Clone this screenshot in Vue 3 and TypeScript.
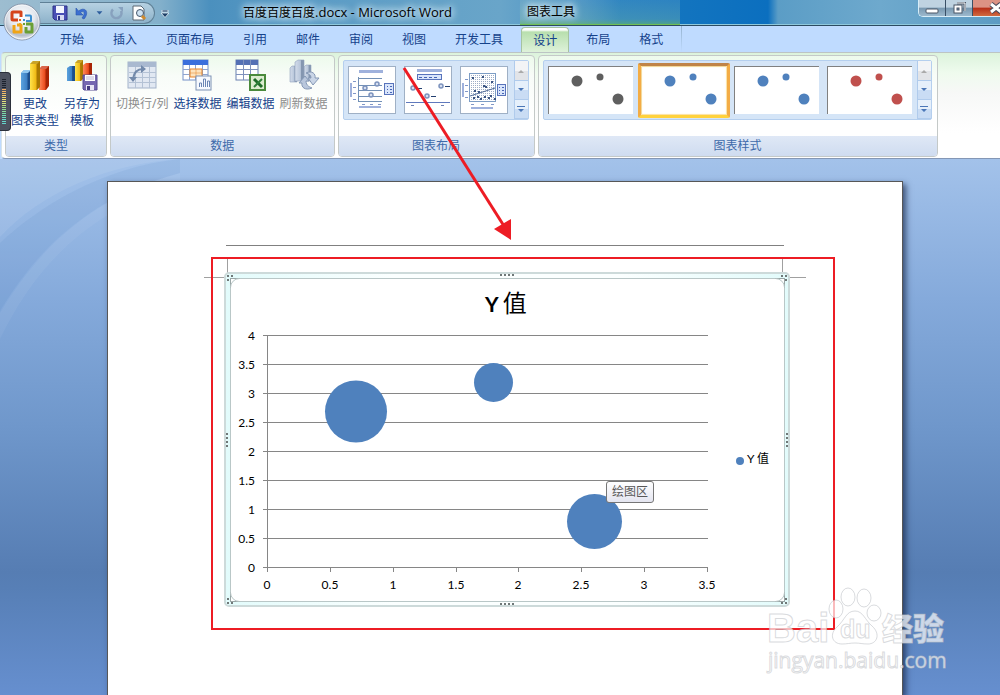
<script setup lang="ts">
interface Dot { x: number; y: number; r: number }

const tabs: string[] = ['开始', '插入', '页面布局', '引用', '邮件', '审阅', '视图', '开发工具', '设计', '布局', '格式']
const activeTab = '设计'

const styleColors: string[] = ['#5f5f5f', '#4f81bd', '#4f81bd', '#c0504d']
const selectedStyle = 1
const thumbDots: Dot[] = [
  { x: 28, y: 14, r: 5 },
  { x: 51, y: 10, r: 3 },
  { x: 69, y: 32, r: 5 },
]

const yTicks = [4, 3.5, 3, 2.5, 2, 1.5, 1, 0.5, 0].map((v) => ({ label: String(v), y: Math.floor(567.5 - v * 58) }))
const xTicks = [0, 0.5, 1, 1.5, 2, 2.5, 3, 3.5].map((v) => ({ label: String(v), x: 267 + Math.round(v * 125.7) }))
const bubbles: Dot[] = [
  { x: 356, y: 411.5, r: 31 },
  { x: 493.5, y: 382.5, r: 19.5 },
  { x: 594.5, y: 521.5, r: 27.5 },
]

const scatter: number[][] = [[12, 12], [22, 11], [23, 20], [31, 16], [14, 25], [13, 32], [17, 31], [20, 33], [24, 31], [28, 32], [30, 30], [34, 33], [18, 26], [25, 21]]
const meter: string[] = ['#1c222d', '#1c222d', '#1c222d', '#1c222d', '#1c222d', '#f0a860', '#f4b566', '#f4c268', '#f0cc70', '#f4d470', '#f2de74', '#e6e27c', '#d0e080', '#bade84', '#a4dc88', '#92dc90', '#88dc9c', '#7cdcaa', '#74dcb6', '#6edcc2', '#6adcca', '#66d8cc', '#64d4cc']
</script>

<template>
  <div class="app">
    <header class="titlebar">
      <div class="qat">
        <button class="plain" aria-label="保存">
          <svg width="16" height="16" viewBox="0 0 16 16"><path d="M1 1h14v14H3l-2-2z" fill="#4a4fb5" stroke="#2d3286" /><rect x="4" y="1" width="8" height="7" fill="#f4f6ff" /><rect x="5" y="10" width="7" height="5" fill="#d7daf2" /><rect x="6" y="11" width="2" height="4" fill="#2d3286" /></svg>
        </button>
        <button class="plain" aria-label="撤消">
          <svg width="14" height="14" viewBox="0 0 14 14"><path d="M1 2v7h7L5.500 6.500C9 4 11 7 7 12l2 1c6-7 1-13-5.500-8z" fill="#3c6fd0" stroke="#2854ac" stroke-width=".6" /></svg>
        </button>
        <svg width="7" height="5" viewBox="0 0 7 5"><path d="M0 0h7L3.500 4z" fill="#2c5f9c" stroke="#dce9f5" stroke-width=".4" /></svg>
        <button class="plain" aria-label="恢复" disabled>
          <svg width="14" height="14" viewBox="0 0 14 14"><path d="M3 3.500A5 5 0 1 0 11 5" fill="none" stroke="#87a1be" stroke-width="2.500" /><path d="M8 1h5v5z" fill="#87a1be" /></svg>
        </button>
        <button class="plain" aria-label="打印预览">
          <svg width="16" height="16" viewBox="0 0 16 16"><path d="M2 1h8l3 3v11H2z" fill="#fff" stroke="#5b6673" /><circle cx="9" cy="8" r="3.500" fill="#cfe3f3" stroke="#44566b" /><path d="m11 11 3 3" stroke="#d08a2c" stroke-width="3" /></svg>
        </button>
        <button class="qat-more" aria-label="自定义快速访问工具栏">
          <svg width="8" height="8" viewBox="0 0 8 8"><path d="M1 0h6v2H1zM0 3h8L4 7.500z" fill="#1f4068" stroke="#e6f2fa" stroke-width=".8" /></svg>
        </button>
      </div>
      <div class="doc-title"><span class="glow">百度百度百度<span class="latin">.docx - Microsoft Word</span></span></div>
      <div class="context"><span class="glow">图表工具</span></div>
      <div class="window-controls">
        <button class="wc" aria-label="最小化"><svg width="14" height="12" viewBox="0 0 14 12"><rect x="1" y="7" width="12" height="4" rx="1" fill="#fff" stroke="#4b5666" /></svg></button>
        <button class="wc" aria-label="还原"><svg width="14" height="12" viewBox="0 0 14 12"><path d="M5 1h8v8" fill="none" stroke="#4b5666" stroke-width="3" /><path d="M5 1h8v8" fill="none" stroke="#fff" /><rect x="2" y="3" width="8" height="8" fill="#fff" stroke="#4b5666" /><rect x="5" y="6" width="2" height="2" fill="#7395b5" stroke="#4b5666" /></svg></button>
        <button class="wc close" aria-label="关闭"><svg width="14" height="12" viewBox="0 0 14 12"><path d="m2 2 10 8M12 2 2 10" stroke="#4b4b5c" stroke-width="5" /><path d="m2 2 10 8M12 2 2 10" stroke="#fff" stroke-width="3" /></svg></button>
      </div>
    </header>

    <nav class="tabs">
      <button v-for="t in tabs" :key="t" class="tab" :class="{ active: t === activeTab }">{{ t }}</button>
      <i class="context-edge"></i>
    </nav>

    <button class="orb" aria-label="Office 按钮">
      <svg width="40" height="40" viewBox="0 0 40 40">
        <defs>
          <radialGradient id="orbFill" cx=".5" cy=".35" r=".65"><stop offset="0" stop-color="#fff" /><stop offset=".55" stop-color="#e3e7ee" /><stop offset=".8" stop-color="#b5bdca" /><stop offset="1" stop-color="#eef2f8" /></radialGradient>
        </defs>
        <circle cx="20" cy="20" r="18" fill="url(#orbFill)" stroke="#8795aa" />
        <circle cx="20" cy="20" r="17" fill="none" stroke="#fff" stroke-opacity=".7" />
        <g fill="none" stroke-linejoin="round">
          <path d="M16 18h-5q-1 0-1-1v-6q0-1 1-1h8v5" stroke="#d5441c" stroke-width="3" />
          <path d="M23 13.500h5q1 0 1 1V19h-5" stroke="#3d8fd0" stroke-width="2" />
          <path d="M12 23v7h7v-7h-4" stroke="#f0a416" stroke-width="3" />
          <path d="M24 22h6v8h-6v-5" stroke="#6a9f35" stroke-width="3" />
        </g>
        <g fill="#e06a24"><rect x="17" y="17" width="2" height="2" /><rect x="17" y="21" width="2" height="2" fill="#efa81c" /><rect x="21" y="17" width="2" height="2" fill="#3d8fd0" /><rect x="21" y="21" width="2" height="2" fill="#6a9f35" /></g>
      </svg>
    </button>

    <section class="ribbon">
      <div class="group">
        <div class="tools">
          <button class="tool">
            <svg width="32" height="32" viewBox="0 0 32 32">
              <defs>
                <linearGradient id="gb"><stop offset="0" stop-color="#5ba3de" /><stop offset=".6" stop-color="#3c7fc4" /><stop offset=".7" stop-color="#1c4e8c" /></linearGradient>
                <linearGradient id="gy"><stop offset="0" stop-color="#ffe34c" /><stop offset=".6" stop-color="#efb913" /><stop offset=".7" stop-color="#a97800" /></linearGradient>
                <linearGradient id="gr"><stop offset="0" stop-color="#ff8a5c" /><stop offset=".6" stop-color="#ea4b1c" /><stop offset=".7" stop-color="#a82404" /></linearGradient>
                <linearGradient id="gg"><stop offset="0" stop-color="#d3dcea" /><stop offset=".6" stop-color="#b8c6da" /><stop offset=".7" stop-color="#8496b0" /></linearGradient>
              </defs>
              <path d="M2 14l3-3h7v18l-2 2H2z" fill="url(#gb)" /><path d="M2 14l3-3h7l-3 3z" fill="#8fc6ef" />
              <path d="M20 10l3-3h7v20l-3 4h-7z" fill="url(#gr)" /><path d="M20 10l3-3h7l-3 3z" fill="#d9674b" />
              <path d="M11 5l3-3h7v26l-3 3h-7z" fill="url(#gy)" /><path d="M11 5l3-3h7l-3 3z" fill="#c9a327" />
            </svg>
            <span>更改<br />图表类型</span>
          </button>
          <button class="tool">
            <svg width="32" height="32" viewBox="0 0 32 32">
              <path d="M1 9l3-2h5v15H1z" fill="url(#gb)" /><path d="M17 6l3-2h6v18h-9z" fill="url(#gr)" /><path d="M9 4l3-3h5v19l-2 2H9z" fill="url(#gy)" /><path d="M9 4l3-3h5l-2 3z" fill="#c9a327" />
              <path d="M17 16h14v15H18l-1-1z" fill="#7567b1" stroke="#574b92" /><rect x="19" y="16" width="10" height="6" fill="#fff" /><path d="M20 18h8M20 20h8" stroke="#bcb8d8" /><rect x="20" y="26" width="8" height="5" fill="#e8e6f5" /><rect x="21" y="27" width="3" height="4" fill="#443a80" />
            </svg>
            <span>另存为<br />模板</span>
          </button>
        </div>
        <footer>类型</footer>
      </div>

      <div class="group">
        <div class="tools">
          <button class="tool" disabled>
            <svg width="32" height="32" viewBox="0 0 32 32">
              <rect x="2" y="3" width="28" height="26" fill="#e1e8f2" stroke="#a3b3ca" /><rect x="2" y="3" width="28" height="5" fill="#a9b9d0" />
              <path d="M3 13.500h27M3 18.500h27M3 23.500h27M9.500 8v21M16.500 8v21M23.500 8v21" stroke="#b4c2d5" />
              <path d="M7 20C8 13 12 10 17 10" fill="none" stroke="#738aab" stroke-width="2" /><path d="M15 6l5 4-5 4zM3 18h8l-4 5z" fill="#738aab" />
            </svg>
            <span>切换行/列</span>
          </button>
          <button class="tool">
            <svg width="32" height="32" viewBox="0 0 32 32">
              <rect x="1" y="1" width="25" height="20" fill="#fff" stroke="#7590c8" /><rect x="1" y="1" width="25" height="5" fill="#3a6fdc" />
              <path d="M1 10.500h25M1 15.500h25M7.500 6v15M13.500 6v15M20.500 6v15" stroke="#8fa5cf" /><path d="M8 10h12v8H8z" fill="#fde3bd" stroke="#e5842c" /><path d="M8 14h12M14 10v8" stroke="#e5842c" stroke-opacity=".5" />
              <rect x="14" y="17" width="15" height="14" fill="#f6f9fe" stroke="#7d92b3" /><path d="M17.500 28v-4h2v4M21.500 28v-8h2v8M25.500 28v-6h2v6" fill="none" stroke="#6b86b4" />
            </svg>
            <span>选择数据</span>
          </button>
          <button class="tool">
            <svg width="32" height="32" viewBox="0 0 32 32">
              <rect x="1" y="1" width="22" height="20" fill="#fff" stroke="#6b80b0" /><rect x="1" y="1" width="22" height="5" fill="#5470b4" />
              <path d="M1 10.500h22M1 15.500h22M8.500 1v20M15.500 1v20" stroke="#7f92bd" />
              <rect x="15" y="16" width="15" height="15" fill="#dcecd0" stroke="#4a8a3c" stroke-width="2" /><path d="m19 20 8 8" stroke="#1f6a28" stroke-width="3" /><path d="m27 20-8 8" stroke="#2f8038" stroke-width="2" />
            </svg>
            <span>编辑数据</span>
          </button>
          <button class="tool" disabled>
            <svg width="32" height="32" viewBox="0 0 32 32">
              <path d="M2 9l2-2h5v16H2z" fill="url(#gg)" stroke="#92a3bd" stroke-width=".6" /><path d="M16 8l2-2h5v16h-7z" fill="url(#gg)" stroke="#92a3bd" stroke-width=".6" /><path d="M7 3l3-2h6v21H7z" fill="url(#gg)" stroke="#92a3bd" stroke-width=".6" />
              <path d="M11 24l6-7 4 5h-3c0 5 4 6 6 7-7 3-11-1-10-5z" fill="#b9c7dc" stroke="#8598b5" /><path d="M18 14c6-3 10 1 9 5h4l-6 7-5-7h3c0-3-2-4-5-5z" fill="#c9d5e6" stroke="#8598b5" />
            </svg>
            <span>刷新数据</span>
          </button>
        </div>
        <footer>数据</footer>
      </div>

      <div class="group">
        <div class="gallery layouts">
          <button class="thumb" aria-label="布局 1">
            <svg width="46" height="46" viewBox="0 0 46 46">
              <g fill="#9fb1dc"><rect x="10" y="3" width="24" height="3" /><rect x="10" y="39" width="22" height="2" /><rect x="1" y="16" width="2" height="14" /></g>
              <path d="M9.500 10v25M9 11.500h24M9 18.500h24M9 23.500h24M9 29.500h24M9 34.500h24" stroke="#7290b6" />
              <path d="M4 14.500h3M4 20.500h3M4 26.500h3M4 32.500h3M13 37.500h3M21 37.500h3M29 37.500h3" stroke="#8197c8" />
              <g fill="#d6deef" stroke="#7c92bd" stroke-width="1.500"><circle cx="16" cy="21" r="2" /><circle cx="28" cy="17" r="2" /><circle cx="22" cy="28" r="2" /></g>
              <rect x="35.500" y="16.500" width="9" height="11" fill="#d9e5fb" stroke="#5873bb" /><path d="M38 19.500h1M41 19.500h2M38 22.500h1M41 22.500h2M38 25.500h1M41 25.500h2" stroke="#4664b5" />
            </svg>
          </button>
          <button class="thumb" aria-label="布局 2">
            <svg width="46" height="46" viewBox="0 0 46 46">
              <rect x="12" y="2" width="25" height="3" fill="#9fb1dc" /><rect x="12.500" y="7.500" width="24" height="5" fill="#d9e5fb" stroke="#5873bb" /><path d="M14 10.500h20" stroke="#4664b5" stroke-dasharray="3 2" />
              <path d="M1 35.500h44" stroke="#5f79bd" /><path d="M6 38.500h3M36 38.500h3" stroke="#6d82b5" /><path d="M12 21.500h5M40 19.500h5M26 29.500h5" stroke="#223f70" />
              <g fill="#d6deef" stroke="#7c92bd" stroke-width="1.500"><circle cx="8" cy="21" r="2" /><circle cx="36" cy="19" r="2" /><circle cx="22" cy="29" r="2" /></g>
            </svg>
          </button>
          <button class="thumb" aria-label="布局 3">
            <svg width="46" height="46" viewBox="0 0 46 46">
              <defs><pattern id="grid" width="2" height="2" patternUnits="userSpaceOnUse"><rect width="1" height="1" fill="#9eadc6" /></pattern></defs>
              <rect x="8.500" y="6.500" width="26" height="28" fill="url(#grid)" stroke="#7d9dc5" />
              <rect v-for="(p, i) in scatter" :key="i" :x="p[0] - 1" :y="p[1] - 2" width="2" height="2" fill="#3b5481" />
              <path d="M9 29 34 21" stroke="#506a97" /><path d="M4 12.500h3M4 18.500h3M4 24.500h3M4 30.500h3M10 37.500h3M20 37.500h3M30 37.500h3" stroke="#8197c8" />
              <g fill="#9fb1dc"><rect x="1" y="16" width="2" height="14" /><rect x="10" y="40" width="22" height="2" /></g>
              <rect x="36.500" y="17.500" width="8" height="11" fill="#d9e5fb" stroke="#5873bb" /><path d="M38 20.500h1M41 20.500h2M38 23.500h1M41 23.500h2M38 26.500h1M41 26.500h2" stroke="#4664b5" />
            </svg>
          </button>
          <div class="scroller">
            <button aria-label="上一行" disabled><svg width="8" height="6" viewBox="0 0 8 6"><path d="M1 5h6L4 2z" fill="#aaa" /></svg></button>
            <button aria-label="下一行"><svg width="8" height="6" viewBox="0 0 8 6"><path d="M1 1h6L4 4z" fill="#4b77b8" /></svg></button>
            <button aria-label="其他"><svg width="8" height="8" viewBox="0 0 8 8"><path d="M0 1h8v1H0zM1 4h6L4 7z" fill="#4b77b8" /></svg></button>
          </div>
        </div>
        <footer>图表布局</footer>
      </div>

      <div class="group">
        <div class="gallery styles">
          <button v-for="(c, i) in styleColors" :key="i" class="swatch" :class="{ selected: i === selectedStyle }" :aria-label="'样式 ' + (i + 1)">
            <svg width="84" height="47" viewBox="0 0 84 47"><circle v-for="d in thumbDots" :key="d.x" :cx="d.x" :cy="d.y" :r="d.r + 0.500" :fill="c" /></svg>
          </button>
          <div class="scroller">
            <button aria-label="上一行" disabled><svg width="8" height="6" viewBox="0 0 8 6"><path d="M1 5h6L4 2z" fill="#aaa" /></svg></button>
            <button aria-label="下一行"><svg width="8" height="6" viewBox="0 0 8 6"><path d="M1 1h6L4 4z" fill="#4b77b8" /></svg></button>
            <button aria-label="其他"><svg width="8" height="8" viewBox="0 0 8 8"><path d="M0 1h8v1H0zM1 4h6L4 7z" fill="#4b77b8" /></svg></button>
          </div>
        </div>
        <footer>图表样式</footer>
      </div>
    </section>

    <div class="meter"><i v-for="(m, i) in meter" :key="i" :style="{ background: m }"></i></div>

    <main class="workspace">
      <svg class="waves" viewBox="0 0 180 200" width="180" height="200">
        <path d="M0 0H180C110 4 40 34 0 78z" fill="#fff" fill-opacity=".08" />
        <path d="M180 0C100 8 36 50 0 84V152C34 96 84 40 180 14z" fill="#2d66b0" fill-opacity=".07" />
        <path d="M180 14C84 40 34 98 0 154V180C34 110 84 54 180 24z" fill="#fff" fill-opacity=".05" />
      </svg>
      <article class="page">
        <hr />
        <figure class="chart">
          <svg viewBox="204 246 602 364" width="602" height="364" role="img" aria-label="Y 值">
            <defs>
              <linearGradient id="frameFill"><stop offset="0" stop-color="#e2fbfb" /><stop offset=".3" stop-color="#fbffff" /><stop offset=".7" stop-color="#fbffff" /><stop offset="1" stop-color="#e2fbfb" /></linearGradient>
            </defs>
            <path d="M204 277.500h22M788 277.500h18M227.500 259v14M782.500 259v14" stroke="#a0a0a0" />
            <rect x="225" y="273" width="564" height="333" rx="4" fill="url(#frameFill)" stroke="#cddada" stroke-width="2" />
            <rect x="230.500" y="278.500" width="554" height="323" fill="#fff" stroke="#9aa6a6" />
            <rect x="230.500" y="278.500" width="554" height="323" rx="9" fill="none" stroke="#b9c7c7" />
            <g fill="#707878">
              <path d="M500 274h2v2h-2zM504 274h2v2h-2zM508 274h2v2h-2zM512 274h2v2h-2zM500 603h2v2h-2zM504 603h2v2h-2zM508 603h2v2h-2zM512 603h2v2h-2z" />
              <path d="M226 433h2v2h-2zM226 437h2v2h-2zM226 441h2v2h-2zM226 445h2v2h-2zM786 433h2v2h-2zM786 437h2v2h-2zM786 441h2v2h-2zM786 445h2v2h-2z" />
              <path d="M227 275h2v2h-2zM231 275h2v2h-2zM227 279h2v2h-2zM781 275h2v2h-2zM785 275h2v2h-2zM785 279h2v2h-2zM227 598h2v2h-2zM227 602h2v2h-2zM231 602h2v2h-2zM785 598h2v2h-2zM785 602h2v2h-2zM781 602h2v2h-2z" />
            </g>
            <g class="grid-lines">
              <rect v-for="t in yTicks" :key="t.y" x="263" :y="t.y" width="445" height="1" />
              <rect x="267" y="336" width="1" height="232" />
              <rect v-for="t in xTicks" :key="t.x" :x="t.x" y="568" width="1" height="4" />
            </g>
            <circle v-for="b in bubbles" :key="b.x" :cx="b.x" :cy="b.y" :r="b.r" fill="#4f81bd" />
            <g class="axis">
              <text v-for="t in yTicks" :key="t.y" x="255" :y="t.y + 5" text-anchor="end">{{ t.label }}</text>
              <text v-for="t in xTicks" :key="t.x" :x="t.x" y="589" text-anchor="middle">{{ t.label }}</text>
              <circle cx="740" cy="461" r="4" fill="#4f81bd" />
              <text x="747" y="463">Y <tspan class="cjk">值</tspan></text>
            </g>
            <text class="chart-title" x="485" y="312">Y <tspan class="cjk">值</tspan></text>
          </svg>
          <div class="tooltip" role="tooltip">绘图区</div>
        </figure>
        <div class="highlight"></div>
      </article>
    </main>

    <svg class="arrow" width="520" height="250" viewBox="0 0 520 250">
      <path d="M404 68 504 226" stroke="#ed1c24" stroke-width="3" /><path d="M511 240 494 229l17-10z" fill="#ed1c24" />
    </svg>

    <svg class="watermark" width="200" height="96" viewBox="762 582 200 96">
      <g fill="#fff" fill-opacity=".7" stroke="#bfc3c8" stroke-opacity=".6" stroke-width="1">
        <ellipse cx="836" cy="609" rx="7" ry="9" /><ellipse cx="848" cy="597" rx="7" ry="9" /><ellipse cx="864" cy="598" rx="7" ry="9" /><ellipse cx="874" cy="613" rx="7" ry="8" />
        <path d="M855 611c8 0 10 9 17 15 9 8 5 18-4 18-6 0-8-1-13-1s-8 1-13 1c-10 0-13-10-5-17 8-7 9-16 18-16z" />
        <text class="wm-bai" x="767" y="642">Bai</text>
        <text class="wm-du" x="840" y="638">du</text>
        <text class="wm-cn" x="882" y="640">经验</text>
        <text class="wm-url" x="768" y="668">jingyan.baidu.com</text>
      </g>
    </svg>
  </div>
</template>

<style>
html, body { margin: 0; height: 100%; overflow: hidden; }
</style>

<style scoped>
.app { position: relative; display: flex; flex-direction: column; height: 100vh; overflow: hidden; background: #bfdbff; font: 12px/17px "Noto Sans", "Noto Sans CJK SC", sans-serif; color: #15428b; }
button { margin: 0; padding: 0; border: 0; background: none; font: inherit; color: inherit; }
svg { display: block; flex: none; }

.titlebar { flex: none; box-sizing: border-box; height: 26px; display: grid; grid-template-columns: 175px 345px 160px 1fr; border-bottom: 1px solid #2c4b62; box-shadow: inset 0 -1px #8fc8dc; background: linear-gradient(to right, #9dbdd0 0, #83b0cb 160px, #4b90be 210px, #5a9bc5 300px, #69a5c9 500px, #4c94c6 570px, #1878bf 620px, #0b6fbf 768px, #5b9dc6 778px, #6ea9cd 880px, #5c9bc3 100%); }
.qat { justify-self: start; box-sizing: border-box; display: flex; align-items: center; gap: 7px; width: 115px; height: 22px; margin: 2px 0 0 40px; padding-left: 12px; border: 1px solid #5f8096; border-left: 0; border-radius: 0 11px 11px 0; background: linear-gradient(#b6d1e2, #8db2ca); position: relative; }
.qat-more { position: absolute; left: 121px; top: 7px; }
.doc-title { align-self: center; text-align: center; color: #000; white-space: nowrap; }
.latin { font-size: 13px; font-family: "Open Sans", sans-serif; }
.glow { text-shadow: 0 0 6px #dff0fa, 0 0 8px #dff0fa, 0 0 10px #cfe6f4; }
.context { padding: 3px 7px; color: #000; background: linear-gradient(rgba(150,190,200,.2), rgba(150,200,170,.3) 80%, rgba(115,190,110,.6)); border-bottom: 1px solid #70bf54; }
.window-controls { justify-self: end; display: flex; width: 82px; height: 17px; overflow: hidden; box-sizing: border-box; border: solid #d7edf8; border-width: 0 0 1px 1px; border-radius: 0 0 0 5px; }
.wc { flex: none; display: grid; place-items: center; width: 27px; height: 16px; border-right: 1px solid #395066; background: linear-gradient(#bfd3e1 0 45%, #7898b0 50%, #9db9cd); }
.wc.close { width: 46px; background: linear-gradient(#dc9284 0 45%, #b72e18 50%, #d06a40); }

.tabs { flex: none; display: flex; gap: 7px; height: 26px; padding-left: 49px; background: #bfdbff; }
.tab { height: 26px; padding: 0 11px; border-radius: 4px 4px 0 0; }
.tab.active { box-sizing: border-box; border: 1px solid #a6c3a0; border-bottom: 0; margin-top: 1px; background: linear-gradient(#fff 0 2px, #b8dfae 4px, #e0f3dc); }
.tab.active + .tab { margin-left: -1px; }
.context-edge { width: 1px; background: linear-gradient(#95b3cf, #bfdbff); }
.orb { position: absolute; left: 2px; top: 2px; z-index: 2; }

.ribbon { flex: none; box-sizing: border-box; display: flex; gap: 3px; height: 107px; margin-left: 1px; padding: 2px 2px 2px 3px; border-top: 1px solid #bcc4c4; border-left: 1px solid #d8e4ea; border-bottom: 1px solid #8497b5; border-radius: 4px 0 0 4px; background: linear-gradient(#dcf3dc, #effbee 20px, #f7f8f7 40px, #fff 80px); }
.group { box-sizing: border-box; display: flex; flex-direction: column; height: 102px; border: 1px solid #c4c9c8; border-radius: 4px; overflow: hidden; background: linear-gradient(#edfaec, #f8fcf8 20px, #fff 60px); }
.group footer { height: 20px; line-height: 19px; text-align: center; color: #3e6aaa; background: linear-gradient(#dfe8f6, #cfdcf0); }
.tools { flex: 1; display: flex; align-items: flex-start; gap: 5px; padding: 3px 6px 0 5px; }
.tool { display: flex; flex-direction: column; align-items: center; gap: 4px; white-space: nowrap; }
.tool:disabled { color: #8d8d8d; }
.gallery { display: flex; align-items: flex-start; height: 58px; margin: 4px 5px auto 4px; border: 1px solid #b5cfee; border-radius: 2px; background: #d5e5f7; }
.layouts { gap: 8px; padding-left: 4px; }
.thumb { margin-top: 5px; border: 1px solid #9fb0c5; background: #fff; }
.styles { gap: 7px; padding-left: 4px; }
.swatch { position: relative; margin-top: 5px; border: solid #808080; border-width: 1px 0 0 1px; background: #fff; }
.swatch + .swatch { margin-left: 1px; }
.swatch.selected::before { content: ""; position: absolute; inset: -4px -4px -4px -4px; border: 3px solid; border-color: #c08448 #f3ac45 #ffd23d #f3ac45; border-radius: 2px; box-shadow: inset 0 0 1px 1px #ffe3a0; }
.scroller { width: 14px; align-self: stretch; display: grid; grid-template-rows: 20px 19px 19px; margin-left: -2px; }
.scroller button { display: grid; place-items: center; border: 1px solid #b0cbec; border-width: 0 0 1px 1px; background: linear-gradient(#e6f0fb 50%, #c9dcf4 52%); }
.scroller button:disabled { background: linear-gradient(#f3f4f6 50%, #e2e4e8 52%); }

.meter { position: absolute; left: 0; top: 72px; z-index: 2; box-sizing: border-box; display: flex; flex-direction: column; gap: 1px; width: 11px; height: 59px; padding: 6px 4px 0 2px; border: 1px solid #2b303b; border-left: 0; border-radius: 0 4px 4px 0; background: #4d5260; }
.meter i { flex: none; height: 1px; }

.workspace { flex: 1; min-height: 0; position: relative; display: flex; justify-content: center; padding: 22px 0 0 10px; background: linear-gradient(#a3c2ea, #85aadb 26%, #6f97cb 50%, #567db3 77%, #577fb6 80%, #668fcf); overflow: hidden; }
.waves { position: absolute; left: 0; top: 0; }
.page { position: relative; box-sizing: border-box; width: 796px; padding: 63px 96px 0; border: 1px solid #575757; border-bottom: 0; background: #fff; box-shadow: 3px 3px 6px rgba(20, 35, 70, .7); }
hr { margin: 0 22px; border: 0; height: 1px; background: #808080; }
.chart { position: relative; margin: 0; }
.grid-lines { fill: #868686; }
.axis { font: 12px Lato, sans-serif; fill: #000; }
.cjk { font-family: "Noto Sans CJK SC", sans-serif; font-weight: 400; }
.chart-title { font: bold 21px Lato, sans-serif; fill: #000; }
.chart-title .cjk { font-size: 24px; }
.tooltip { position: absolute; left: 402px; top: 235px; padding: 1px 5px 2px; border: 1px solid #767676; border-radius: 3px; color: #575757; background: linear-gradient(#fff, #e4e5f0); }
.highlight { position: absolute; left: 103px; top: 75px; width: 620px; height: 369px; border: 2px solid #ed1c24; }

.arrow { position: absolute; left: 0; top: 0; z-index: 3; pointer-events: none; }
.watermark { position: absolute; right: 38px; bottom: 17px; pointer-events: none; }
.wm-bai { font: bold 40px "Liberation Sans", sans-serif; }
.wm-du { font: bold 25px "Liberation Sans", sans-serif; }
.wm-cn { font: 900 31px "Noto Sans CJK SC", sans-serif; }
.wm-url { font: 21px "Open Sans", sans-serif; }
</style>
